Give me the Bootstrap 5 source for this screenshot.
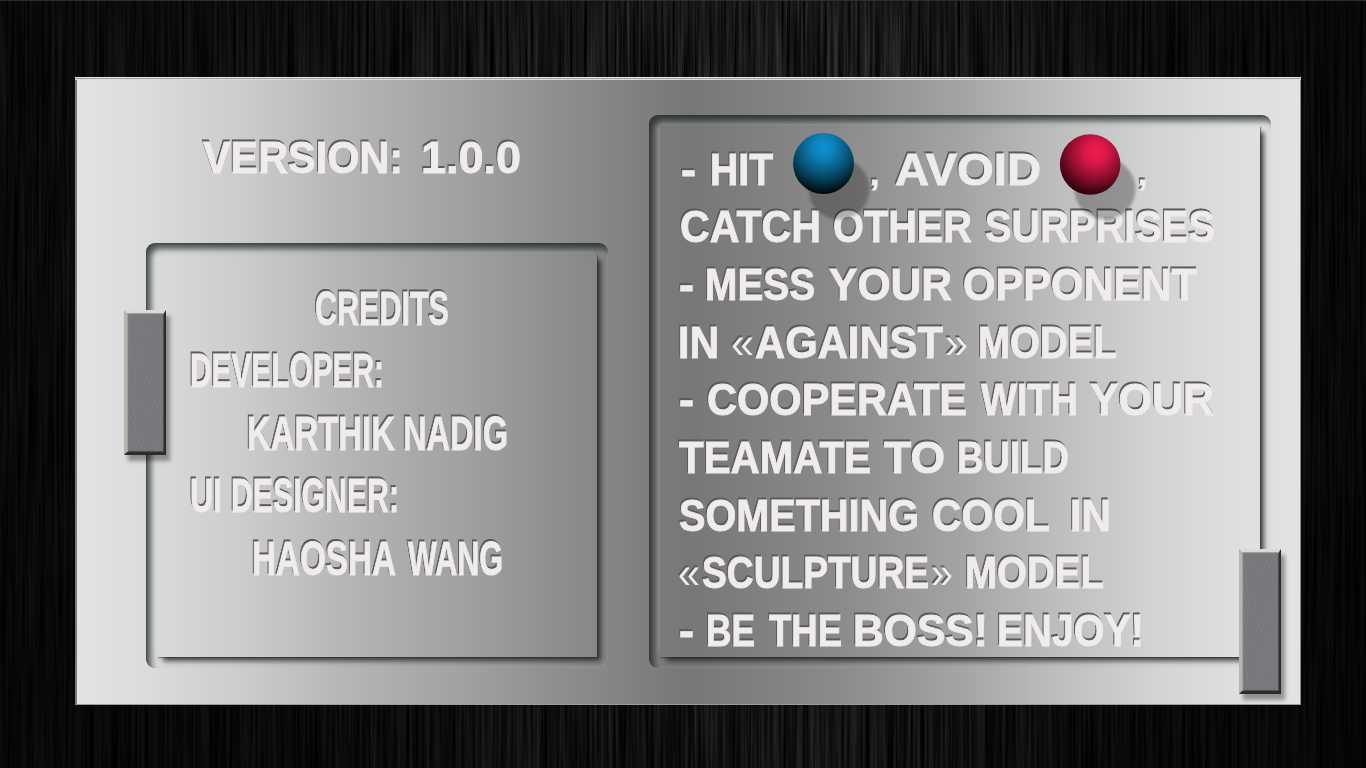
<!DOCTYPE html>
<html lang="en">
<head>
<meta charset="utf-8">
<meta name="viewport" content="width=device-width, initial-scale=1">
<title>About</title>
<link href="https://cdn.jsdelivr.net/npm/bootstrap@5.3.0/dist/css/bootstrap.min.css" rel="stylesheet">
<style>
  body { background: #090909; width: 1366px; height: 768px; font-family: "Liberation Sans", sans-serif; }
  .brushed { z-index: 0; }
  .plate {
    margin: 77px 65px 63px 75px; width: 1226px; height: 628px; z-index: 1;
    border-left: 2px solid #77797a; border-right: 1px solid #8b8b8b; border-bottom: 1px solid #9a9a9a;
    background: linear-gradient(90deg, #e3e3e3 0, #dbdbdb 6%, #cbcbcb 14%, #b3b3b3 23%, #a0a0a0 32%, #8d8d8d 40%, #777 50%, #8a8a8a 62%, #a3a3a3 72%, #bdbdbd 80%, #d3d3d3 88%, #dfdfdf 95%, #e2e2e2 100%);
  }
  .plate::before { content: ""; position: absolute; left: -2px; right: -1px; top: 0; height: 3px; background: linear-gradient(#e8e8e8 0 1px, #9c9c9c 1px 2px, #dedede 2px); }
  .left-side { width: 462px; margin-left: 69px; }
  .right-side { width: 622px; margin-left: 41px; margin-top: 38px; }
  .groove { border-radius: 9px; padding: 11px; box-shadow: inset 5px 6px 6px rgba(28,36,36,.74), inset 1px 1px 2px rgba(40,48,48,.4), inset -1px -1px 1px rgba(255,255,255,.13); }
  .groove-face { box-shadow: 5px 5px 5px -1px rgba(28,36,36,.8), 1px 1px 1px rgba(30,36,36,.4), -3px -3px 4px rgba(255,255,255,.12); }
  .credits { height: 425px; }
  .howto { height: 553px; }
  .credits .groove-face { padding-top: 25px; }
  .howto .groove-face { padding-top: 13.5px; }
  .credits .engraved { height: 62.4px; }
  .howto .engraved { height: 57.7px; }
  .engraved { display: block; flex: none; width: 100%; overflow: visible; }
  .engraved text { font-weight: 700; font-size: 44px; word-spacing: -9px; fill: #efeceb; stroke: #efeceb; stroke-width: .9px; filter: drop-shadow(-1px -1.5px .3px #5a5a5a); }
  .engraved .thin { font-weight: 400; stroke-width: 0; }
  .engraved .comma { font-size: 34px; }
  .credits .engraved text { font-size: 48px; }
  .version { height: 60px; margin-top: 50px; margin-bottom: 56px; }
  .lead-line { position: relative; z-index: 2; }
  .knob {
    width: 42px; height: 145px; z-index: 3; border-style: solid; border-width: 3px 2px 3px 3px;
    border-color: #d9dbd4 #2b2d2a #2b2d2a #b3b6ac;
    background: repeating-linear-gradient(35deg, rgba(255,255,255,.035) 0 1px, rgba(0,0,0,.03) 1px 3px), #7a7a7e;
    box-shadow: 4px 6px 4px rgba(0,0,0,.36), inset 1px 1px 1px #a5a6a8, inset -1px -1px 1px #4c4d4d;
  }
  .knob-left { left: 47px; top: 233px; }
  .knob-right { left: 1162px; top: 472px; }
</style>
</head>
<body class="position-relative overflow-hidden m-0">
<svg class="brushed position-absolute top-0 start-0 w-100 h-100" aria-hidden="true">
  <defs>
    <filter id="grain" x="0" y="0" width="100%" height="100%" color-interpolation-filters="sRGB">
      <feTurbulence type="fractalNoise" baseFrequency=".33 .006" numOctaves="3" seed="8"/>
      <feColorMatrix values=".32 0 0 0 -.065  .32 0 0 0 -.065  .32 0 0 0 -.065  0 0 0 0 1"/>
    </filter>
    <linearGradient id="shade">
      <stop offset="0" stop-color="#000" stop-opacity=".62"/>
      <stop offset=".2" stop-color="#000" stop-opacity=".48"/>
      <stop offset=".5" stop-color="#000" stop-opacity="0.04"/>
      <stop offset=".62" stop-color="#000" stop-opacity="0"/>
      <stop offset=".82" stop-color="#000" stop-opacity=".48"/>
      <stop offset="1" stop-color="#000" stop-opacity=".68"/>
    </linearGradient>
    <linearGradient id="fade" x2="0" y2="1">
      <stop offset=".3" stop-color="#000" stop-opacity="0"/>
      <stop offset="1" stop-color="#000" stop-opacity=".3"/>
    </linearGradient>
  </defs>
  <rect width="100%" height="100%" filter="url(#grain)"/>
  <rect width="100%" height="100%" fill="url(#shade)"/>
  <rect width="100%" height="100%" fill="url(#fade)"/>
  <rect width="100%" height="1" fill="#2b2d2d"/>
</svg>

<main class="plate position-relative d-flex align-items-start">
  <section class="left-side d-flex flex-column">
    <svg class="engraved version" viewBox="146 0 462 60">
      <text y="46"><tspan x="203" textLength="200" lengthAdjust="spacingAndGlyphs">VERSION:</tspan> <tspan x="421" textLength="100" lengthAdjust="spacingAndGlyphs">1.0.0</tspan></text>
    </svg>
    <div class="groove credits overflow-hidden">
      <div class="groove-face h-100 d-flex flex-column">
        <svg class="engraved" viewBox="157 0 440 62.4"><text y="46"><tspan x="315" textLength="134" lengthAdjust="spacingAndGlyphs">CREDITS</tspan></text></svg>
        <svg class="engraved" viewBox="157 0 440 62.4"><text y="46"><tspan x="190" textLength="194" lengthAdjust="spacingAndGlyphs">DEVELOPER:</tspan></text></svg>
        <svg class="engraved" viewBox="157 0 440 62.4"><text y="46"><tspan x="247" textLength="148" lengthAdjust="spacingAndGlyphs">KARTHIK</tspan> <tspan x="403" textLength="105" lengthAdjust="spacingAndGlyphs">NADIG</tspan></text></svg>
        <svg class="engraved" viewBox="157 0 440 62.4"><text y="46"><tspan x="190" textLength="32" lengthAdjust="spacingAndGlyphs">UI</tspan> <tspan x="231" textLength="168" lengthAdjust="spacingAndGlyphs">DESIGNER:</tspan></text></svg>
        <svg class="engraved" viewBox="157 0 440 62.4"><text y="46"><tspan x="252" textLength="144" lengthAdjust="spacingAndGlyphs">HAOSHA</tspan> <tspan x="408" textLength="95" lengthAdjust="spacingAndGlyphs">WANG</tspan></text></svg>
      </div>
    </div>
  </section>

  <section class="right-side groove howto overflow-hidden">
    <div class="groove-face h-100 d-flex flex-column">
      <svg class="engraved lead-line" viewBox="660 0 600 57.7">
        <defs>
          <radialGradient id="blueBall" cx=".5" cy=".24" r=".74">
            <stop offset="0" stop-color="#0f92d2"/><stop offset=".25" stop-color="#0d80ba"/><stop offset=".6" stop-color="#07506f"/><stop offset="1" stop-color="#000b12"/>
          </radialGradient>
          <radialGradient id="redBall" cx=".59" cy=".3" r=".76">
            <stop offset="0" stop-color="#f31a50"/><stop offset=".25" stop-color="#d91846"/><stop offset=".6" stop-color="#850d2a"/><stop offset="1" stop-color="#160005"/>
          </radialGradient>
          <filter id="soft" x="-20%" y="-20%" width="140%" height="140%"><feGaussianBlur stdDeviation="1.8"/></filter>
        </defs>
        <text y="45"><tspan x="681" textLength="15" lengthAdjust="spacingAndGlyphs">-</tspan> <tspan x="710" textLength="63" lengthAdjust="spacingAndGlyphs">HIT</tspan> <tspan class="comma" x="870">,</tspan> <tspan x="895" textLength="146" lengthAdjust="spacingAndGlyphs">AVOID</tspan> <tspan class="comma" x="1138">,</tspan></text>
        <circle cx="839" cy="49" r="30.5" fill="#000" opacity=".25" filter="url(#soft)"/>
        <circle cx="823.5" cy="23.5" r="30.5" fill="url(#blueBall)"/>
        <circle cx="1105" cy="49" r="30.5" fill="#000" opacity=".28" filter="url(#soft)"/>
        <circle cx="1090.2" cy="24.5" r="30.3" fill="url(#redBall)"/>
      </svg>
      <svg class="engraved" viewBox="660 0 600 57.7"><text y="45"><tspan x="680" textLength="141" lengthAdjust="spacingAndGlyphs">CATCH</tspan> <tspan x="833" textLength="139" lengthAdjust="spacingAndGlyphs">OTHER</tspan> <tspan x="985" textLength="230" lengthAdjust="spacingAndGlyphs">SURPRISES</tspan></text></svg>
      <svg class="engraved" viewBox="660 0 600 57.7"><text y="45"><tspan x="679" textLength="15" lengthAdjust="spacingAndGlyphs">-</tspan> <tspan x="705" textLength="110" lengthAdjust="spacingAndGlyphs">MESS</tspan> <tspan x="829" textLength="123" lengthAdjust="spacingAndGlyphs">YOUR</tspan> <tspan x="963" textLength="234" lengthAdjust="spacingAndGlyphs">OPPONENT</tspan></text></svg>
      <svg class="engraved" viewBox="660 0 600 57.7"><text y="45"><tspan x="678" textLength="41" lengthAdjust="spacingAndGlyphs">IN</tspan> <tspan class="thin" x="731" textLength="23" lengthAdjust="spacingAndGlyphs">«</tspan><tspan x="755" textLength="188" lengthAdjust="spacingAndGlyphs">AGAINST</tspan><tspan class="thin" x="945" textLength="23" lengthAdjust="spacingAndGlyphs">»</tspan> <tspan x="978" textLength="139" lengthAdjust="spacingAndGlyphs">MODEL</tspan></text></svg>
      <svg class="engraved" viewBox="660 0 600 57.7"><text y="45"><tspan x="679" textLength="15" lengthAdjust="spacingAndGlyphs">-</tspan> <tspan x="707" textLength="260" lengthAdjust="spacingAndGlyphs">COOPERATE</tspan> <tspan x="981" textLength="97" lengthAdjust="spacingAndGlyphs">WITH</tspan> <tspan x="1090" textLength="124" lengthAdjust="spacingAndGlyphs">YOUR</tspan></text></svg>
      <svg class="engraved" viewBox="660 0 600 57.7"><text y="45"><tspan x="679" textLength="192" lengthAdjust="spacingAndGlyphs">TEAMATE</tspan> <tspan x="884" textLength="61" lengthAdjust="spacingAndGlyphs">TO</tspan> <tspan x="957" textLength="112" lengthAdjust="spacingAndGlyphs">BUILD</tspan></text></svg>
      <svg class="engraved" viewBox="660 0 600 57.7"><text y="45"><tspan x="679" textLength="240" lengthAdjust="spacingAndGlyphs">SOMETHING</tspan> <tspan x="932" textLength="118" lengthAdjust="spacingAndGlyphs">COOL</tspan> <tspan x="1070" textLength="41" lengthAdjust="spacingAndGlyphs">IN</tspan></text></svg>
      <svg class="engraved" viewBox="660 0 600 57.7"><text y="45"><tspan class="thin" x="678" textLength="22" lengthAdjust="spacingAndGlyphs">«</tspan><tspan x="702" textLength="227" lengthAdjust="spacingAndGlyphs">SCULPTURE</tspan><tspan class="thin" x="931" textLength="22" lengthAdjust="spacingAndGlyphs">»</tspan> <tspan x="965" textLength="139" lengthAdjust="spacingAndGlyphs">MODEL</tspan></text></svg>
      <svg class="engraved" viewBox="660 0 600 57.7"><text y="45"><tspan x="679" textLength="15" lengthAdjust="spacingAndGlyphs">-</tspan> <tspan x="706" textLength="49" lengthAdjust="spacingAndGlyphs">BE</tspan> <tspan x="769" textLength="73" lengthAdjust="spacingAndGlyphs">THE</tspan> <tspan x="853" textLength="135" lengthAdjust="spacingAndGlyphs">BOSS!</tspan> <tspan x="997" textLength="147" lengthAdjust="spacingAndGlyphs">ENJOY!</tspan></text></svg>
    </div>
  </section>

  <div class="knob knob-left position-absolute"></div>
  <div class="knob knob-right position-absolute"></div>
</main>
<script src="https://cdn.jsdelivr.net/npm/bootstrap@5.3.0/dist/js/bootstrap.bundle.min.js"></script>
</body>
</html>
